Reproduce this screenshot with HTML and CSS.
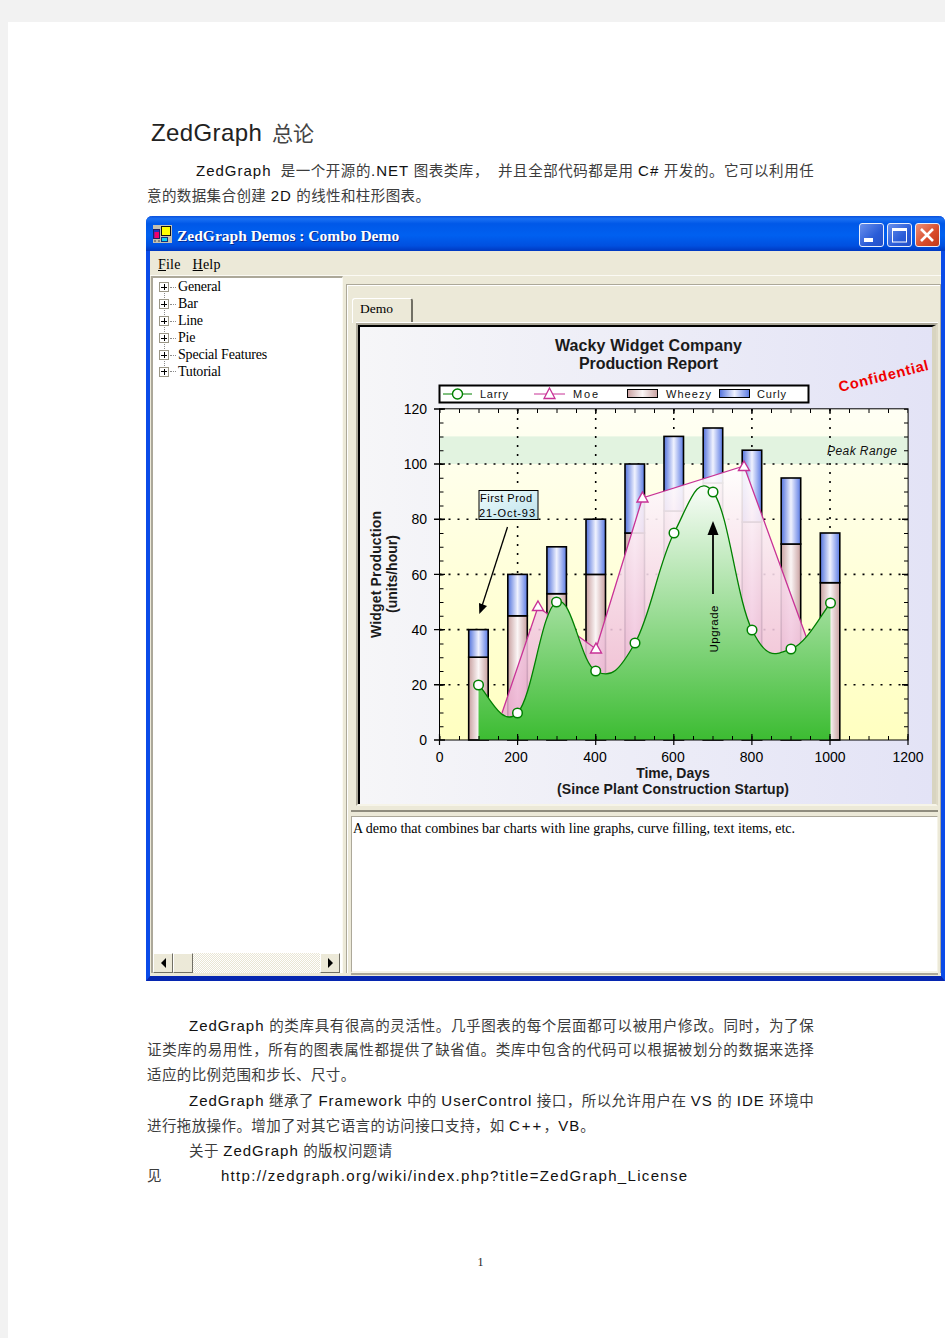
FILE: index.html
```html
<!DOCTYPE html>
<html lang="zh-CN">
<head>
  <meta charset="UTF-8" />
  <title>ZedGraph 总论</title>
  <link rel="stylesheet" href="styles.css">
</head>
<body>

<div class="hoja">
  <h1><span class="h-en">ZedGraph</span> 总论</h1>
  <p class="linea just sangria-a"><span class="en">ZedGraph</span>&nbsp; 是一个开源的<span class="en">.NET</span> 图表类库，&nbsp; 并且全部代码都是用 <span class="en">C#</span> 开发的。它可以利用任</p>
  <p class="linea">意的数据集合创建 <span class="en">2D</span> 的线性和柱形图表。</p>

  <div class="ventana">
    <div class="titulo">
      <svg class="icono" viewBox="0 0 19 18" width="19" height="18">
        <rect x="0" y="0" width="19" height="18" fill="#c4c0b0"/>
        <rect x="0.5" y="4.5" width="6" height="9" fill="#2030c0" stroke="#202060"/>
        <rect x="1.5" y="7" width="4.5" height="6" fill="#f0006a"/>
        <rect x="8.5" y="1.5" width="9" height="9" fill="#ffff00" stroke="#101010"/>
        <rect x="8.5" y="12.5" width="6" height="4" fill="#10d0f0" stroke="#103080"/>
        <rect x="1" y="15" width="2" height="2" fill="#808080"/>
        <rect x="5" y="15" width="2" height="2" fill="#808080"/>
      </svg>
      <span class="titulo-texto">ZedGraph Demos : Combo Demo</span>
      <div class="botones">
        <div class="btn-ven">
          <svg viewBox="0 0 25 24" width="25" height="24"><rect x="5" y="15" width="9" height="4" fill="#fff"/></svg>
        </div>
        <div class="btn-ven">
          <svg viewBox="0 0 25 24" width="25" height="24"><rect x="5.5" y="6" width="14" height="13" fill="none" stroke="#fff"/><rect x="5" y="5" width="15" height="3" fill="#fff"/></svg>
        </div>
        <div class="btn-ven cerrar">
          <svg viewBox="0 0 25 24" width="25" height="24"><path d="M6 6 L18 18 M18 6 L6 18" stroke="#fff" stroke-width="2.6"/></svg>
        </div>
      </div>
    </div>
    <div class="menu"><span><u>F</u>ile</span><span><u>H</u>elp</span></div>
    <div class="paneles">
      <div class="arbol">
        <ul class="nodos">
          <li><i class="caja"></i><i class="puntos"></i>General</li>
          <li><i class="caja"></i><i class="puntos"></i>Bar</li>
          <li><i class="caja"></i><i class="puntos"></i>Line</li>
          <li><i class="caja"></i><i class="puntos"></i>Pie</li>
          <li><i class="caja"></i><i class="puntos"></i>Special Features</li>
          <li><i class="caja"></i><i class="puntos"></i>Tutorial</li>
        </ul>
        <div class="scroll">
          <div class="scroll-btn"><i class="flecha izq"></i></div>
          <div class="scroll-thumb"></div>
          <div class="scroll-pista"></div>
          <div class="scroll-btn"><i class="flecha der"></i></div>
        </div>
      </div>
      <div class="derecha">
        <div class="pestana">Demo</div>
        <div class="marco-grafica">
          <svg class="grafica" viewBox="360 327 572 477" width="572" height="477">
            <defs>
              <linearGradient id="fondo"><stop offset="0" stop-color="#f6f6f8"/><stop offset="1" stop-color="#e3e3f6"/></linearGradient>
              <linearGradient id="plano" x1="0" y1="0" x2="0" y2="1"><stop offset="0" stop-color="#fffff4"/><stop offset="1" stop-color="#ffffc0"/></linearGradient>
              <linearGradient id="curly"><stop offset="0" stop-color="#5272dc"/><stop offset="0.5" stop-color="#f0f2fe"/><stop offset="1" stop-color="#5a7ae4"/></linearGradient>
              <linearGradient id="wheezy"><stop offset="0" stop-color="#c8a0a0"/><stop offset="0.5" stop-color="#fbf6f6"/><stop offset="1" stop-color="#c8a0a0"/></linearGradient>
              <linearGradient id="moe" gradientUnits="userSpaceOnUse" x1="0" y1="465" x2="0" y2="740"><stop offset="0" stop-color="#fff" stop-opacity="0.92"/><stop offset="1" stop-color="#eaa6cc" stop-opacity="0.85"/></linearGradient>
              <linearGradient id="larry" gradientUnits="userSpaceOnUse" x1="0" y1="478" x2="0" y2="740"><stop offset="0" stop-color="#fff"/><stop offset="1" stop-color="#3cbc32"/></linearGradient>
              <linearGradient id="nota" x1="0" y1="0" x2="1" y2="1"><stop offset="0" stop-color="#f0fbfb"/><stop offset="1" stop-color="#bce2ec"/></linearGradient>
            </defs>

            <rect x="360" y="327" width="572" height="477" fill="url(#fondo)"/>

            <text class="t-titulo" x="648.5" y="351" text-anchor="middle" textLength="187">Wacky Widget Company</text>
            <text class="t-titulo" x="648.5" y="369" text-anchor="middle" textLength="139">Production Report</text>
            <text class="t-conf" transform="translate(840 392) rotate(-14)" textLength="92">Confidential</text>

            <!-- legend -->
            <rect x="439.5" y="385.5" width="369" height="17" fill="#fff" stroke="#000" stroke-width="2"/>
            <path d="M443 394 H472" stroke="#008000"/>
            <circle cx="457.5" cy="394" r="5" fill="#fff" stroke="#008000" stroke-width="1.4"/>
            <text class="t-ley" x="480" y="398" textLength="28">Larry</text>
            <path d="M534 394 H565" stroke="#c83296"/>
            <path d="M549.5 388 L555 398.5 H544 Z" fill="#fff" stroke="#c83296" stroke-width="1.3"/>
            <text class="t-ley" x="573" y="398" textLength="25">Moe</text>
            <rect x="627.5" y="389.5" width="30" height="8" fill="url(#wheezy)" stroke="#000"/>
            <text class="t-ley" x="666" y="398" textLength="45">Wheezy</text>
            <rect x="719.5" y="389.5" width="30" height="8" fill="url(#curly)" stroke="#000"/>
            <text class="t-ley" x="757" y="398" textLength="29">Curly</text>

            <!-- plot area -->
            <rect x="439.5" y="408.8" width="468.6" height="331.2" fill="url(#plano)"/>
            <rect x="439.5" y="436.4" width="468.6" height="27.6" fill="#e2f3e0"/>

            <g class="rejilla">
              <path d="M439.5 464 H908 M439.5 519.2 H908 M439.5 574.4 H908 M439.5 629.6 H908 M439.5 684.8 H908"/>
              <path d="M517.6 409 V740 M595.7 409 V740 M673.8 409 V740 M751.9 409 V740 M830 409 V740"/>
            </g>

            <!-- bars -->
            <g class="barras">
              <rect x="468.7" y="657.2" width="19.5" height="82.8" fill="url(#wheezy)"/><rect x="468.7" y="629.6" width="19.5" height="27.6" fill="url(#curly)"/>
              <rect x="507.8" y="615.8" width="19.5" height="124.2" fill="url(#wheezy)"/><rect x="507.8" y="574.4" width="19.5" height="41.4" fill="url(#curly)"/>
              <rect x="546.9" y="593.7" width="19.5" height="146.3" fill="url(#wheezy)"/><rect x="546.9" y="546.8" width="19.5" height="46.9" fill="url(#curly)"/>
              <rect x="586" y="574.4" width="19.5" height="165.6" fill="url(#wheezy)"/><rect x="586" y="519.2" width="19.5" height="55.2" fill="url(#curly)"/>
              <rect x="625" y="533" width="19.5" height="207" fill="url(#wheezy)"/><rect x="625" y="464" width="19.5" height="69" fill="url(#curly)"/>
              <rect x="664" y="511" width="19.5" height="229" fill="url(#wheezy)"/><rect x="664" y="436.4" width="19.5" height="74.6" fill="url(#curly)"/>
              <rect x="703.2" y="483" width="19.5" height="257" fill="url(#wheezy)"/><rect x="703.2" y="428" width="19.5" height="55" fill="url(#curly)"/>
              <rect x="742.2" y="522" width="19.5" height="218" fill="url(#wheezy)"/><rect x="742.2" y="450.2" width="19.5" height="71.8" fill="url(#curly)"/>
              <rect x="781.2" y="544" width="19.5" height="196" fill="url(#wheezy)"/><rect x="781.2" y="478" width="19.5" height="66" fill="url(#curly)"/>
              <rect x="820.3" y="582.7" width="19.5" height="157.3" fill="url(#wheezy)"/><rect x="820.3" y="533" width="19.5" height="49.7" fill="url(#curly)"/>
            </g>

            <!-- Moe -->
            <path d="M502 713 L538 607 L596 649 L642.5 498 L744 466 L811 650 V740 H502 Z" fill="url(#moe)"/>
            <path d="M502 713 L538 607 L596 649 L642.5 498 L744 466 L811 650" fill="none" stroke="#c83296" stroke-width="1.3"/>

            <!-- Larry -->
            <path d="M478.5 685 C486.3 690.6 501.9 729.6 517.5 713 C533.1 696.4 540.9 610.4 556.5 602 C572.1 593.6 580 662.8 595.7 671 C611.4 679.2 619.3 670.6 635 643 C650.7 615.4 658.4 563.2 674 533 C689.6 502.8 697.4 472.6 713 492 C728.6 511.4 736.4 598.6 752 630 C767.6 661.4 775.3 654.4 791 649 C806.7 643.6 822.6 612.2 830.5 603 V740 H478.5 Z" fill="url(#larry)"/>
            <path d="M478.5 685 C486.3 690.6 501.9 729.6 517.5 713 C533.1 696.4 540.9 610.4 556.5 602 C572.1 593.6 580 662.8 595.7 671 C611.4 679.2 619.3 670.6 635 643 C650.7 615.4 658.4 563.2 674 533 C689.6 502.8 697.4 472.6 713 492 C728.6 511.4 736.4 598.6 752 630 C767.6 661.4 775.3 654.4 791 649 C806.7 643.6 822.6 612.2 830.5 603" fill="none" stroke="#008000" stroke-width="1.3"/>

            <g class="marca-moe">
              <path d="M538 601 L543.5 610.5 H532.5 Z"/>
              <path d="M596 643 L601.5 653 H590.5 Z"/>
              <path d="M642.5 492 L648 502 H637 Z"/>
              <path d="M744 461 L749.5 470.5 H738.5 Z"/>
            </g>
            <g class="marca-larry">
              <circle cx="478.5" cy="685" r="4.8"/><circle cx="517.5" cy="713" r="4.8"/><circle cx="556.5" cy="602" r="4.8"/>
              <circle cx="595.7" cy="671" r="4.8"/><circle cx="635" cy="643" r="4.8"/><circle cx="674" cy="533" r="4.8"/>
              <circle cx="713" cy="492" r="4.8"/><circle cx="752" cy="630" r="4.8"/><circle cx="791" cy="649" r="4.8"/>
              <circle cx="830.5" cy="603" r="4.8"/>
            </g>

            <!-- axes and ticks -->
            <rect x="439.5" y="408.8" width="468.6" height="331.2" fill="none" stroke="#000"/>
            <g class="menores">
              <line x1="441.5" y1="408.8" x2="441.5" y2="740"/>
              <line x1="906" y1="408.8" x2="906" y2="740"/>
              <line class="horiz" x1="439.5" y1="738" x2="908" y2="738"/>
              <line class="horiz" x1="439.5" y1="411" x2="908" y2="411"/>
            </g>
            <path d="M434 409 H445 M434 464 H445 M434 519.2 H445 M434 574.4 H445 M434 629.6 H445 M434 684.8 H445 M434 740 H445 M902 464 H908 M902 519.2 H908 M902 574.4 H908 M902 629.6 H908 M902 684.8 H908" stroke="#000" stroke-width="1.4"/>
            <path d="M439.5 734 V745 M517.6 734 V745 M595.7 734 V745 M673.8 734 V745 M751.9 734 V745 M830 734 V745 M908 734 V745 M517.6 409 V414 M595.7 409 V414 M673.8 409 V414 M751.9 409 V414 M830 409 V414" stroke="#000" stroke-width="1.2"/>

            <g class="t-eje" text-anchor="end">
              <text x="427" y="414">120</text><text x="427" y="469">100</text><text x="427" y="524">80</text>
              <text x="427" y="579.5">60</text><text x="427" y="634.5">40</text><text x="427" y="690">20</text><text x="427" y="745">0</text>
            </g>
            <g class="t-eje" text-anchor="middle">
              <text x="439.7" y="762">0</text><text x="516" y="762">200</text><text x="595" y="762">400</text><text x="673" y="762">600</text>
              <text x="751.5" y="762">800</text><text x="830" y="762">1000</text><text x="908" y="762">1200</text>
            </g>

            <text class="t-nombre" x="673" y="778" text-anchor="middle">Time, Days</text>
            <text class="t-nombre" x="673" y="794" text-anchor="middle" textLength="232">(Since Plant Construction Startup)</text>
            <text class="t-nombre" transform="translate(381 574.5) rotate(-90)" text-anchor="middle" textLength="127">Widget Production</text>
            <text class="t-nombre" transform="translate(397 574) rotate(-90)" text-anchor="middle" textLength="78">(units/hour)</text>

            <text class="t-peak" x="827" y="455" textLength="70">Peak Range</text>

            <!-- text item -->
            <rect x="479" y="490.5" width="59" height="29" fill="url(#nota)" stroke="#000"/>
            <text class="t-nota" x="480" y="502" textLength="52">First Prod</text>
            <text class="t-nota" x="479" y="516.5" textLength="56">21-Oct-93</text>
            <path d="M507.5 527 L482 606" stroke="#000" stroke-width="1.3"/>
            <path d="M479.3 614 L479 603 L487 606 Z" fill="#000"/>

            <path d="M713 594 V530" stroke="#000" stroke-width="1.8"/>
            <path d="M713 521 L718.5 535 H707.5 Z" fill="#000"/>
            <text class="t-up" transform="translate(717.5 652.5) rotate(-90)" textLength="47">Upgrade</text>
          </svg>
        </div>
        <div class="descripcion">A demo that combines bar charts with line graphs, curve filling, text items, etc.</div>
      </div>
    </div>
  </div>

  <p class="linea just sangria-b bajo-ventana"><span class="en">ZedGraph</span> 的类库具有很高的灵活性。几乎图表的每个层面都可以被用户修改。同时，为了保</p>
  <p class="linea just">证类库的易用性，所有的图表属性都提供了缺省值。类库中包含的代码可以根据被划分的数据来选择</p>
  <p class="linea">适应的比例范围和步长、尺寸。</p>
  <p class="linea just sangria-b"><span class="en">ZedGraph</span> 继承了 <span class="en">Framework</span> 中的 <span class="en">UserControl</span> 接口，所以允许用户在 <span class="en">VS</span> 的 <span class="en">IDE</span> 环境中</p>
  <p class="linea">进行拖放操作。增加了对其它语言的访问接口支持，如 <span class="en cpp">C++</span>，<span class="en">VB</span>。</p>
  <p class="linea sangria-b">关于 <span class="en">ZedGraph</span> 的版权问题请</p>
  <p class="linea enlace">见<span class="en url">http://zedgraph.org/wiki/index.php?title=ZedGraph_License</span></p>

  <div class="pagina">1</div>
</div>

</body>
</html>
```

FILE: styles.css
```css
html, body {
  margin: 0;
  background: #f2f2f2;
}

.hoja {
  margin: 22px 0 0 8px;
  height: 1316px;
  padding: 91px 131px 0 139px;
  box-sizing: border-box;
  background: #fff;
  font-family: "Liberation Sans", "Noto Sans CJK SC", sans-serif;
  color: #3c3c3c;
  overflow: hidden;
}

h1 {
  margin: 0 0 5px 4px;
  height: 40px;
  line-height: 40px;
  font-size: 21px;
  font-weight: normal;
  color: #444;
}

.h-en {
  font-size: 24px;
  letter-spacing: 0.4px;
  color: #222;
  margin-right: 4px;
}

.linea {
  margin: 0;
  height: 25px;
  line-height: 25px;
  font-size: 14.5px;
  letter-spacing: 0.4px;
  white-space: nowrap;
}

.just {
  letter-spacing: 0.3px;
  white-space: normal;
  text-align: justify;
  text-align-last: justify;
  text-justify: inter-character;
  overflow: hidden;
}

.en {
  font-size: 15px;
  letter-spacing: 1px;
  color: #111;
}

.cpp {
  letter-spacing: 2px;
}

.sangria-a { padding-left: 49px; }
.sangria-b { padding-left: 42px; }
.bajo-ventana { margin-top: 31.5px; }

.url {
  margin-left: 59px;
  letter-spacing: 1.32px;
}

.pagina {
  margin-top: 67px;
  text-align: center;
  font: 12px "Liberation Serif", serif;
  color: #222;
}

/* ventana XP */
.ventana {
  display: flex;
  flex-direction: column;
  box-sizing: border-box;
  height: 765px;
  width: 799px;
  margin: 8px 0 0 -1px;
  border: 4px solid #0a4be8;
  border-top: 0;
  border-bottom: 5px solid #0626b0;
  border-radius: 6px 6px 0 0;
  background: #ece9d8;
  font-family: "Liberation Serif", serif;
  color: #000;
}

.titulo {
  display: flex;
  align-items: center;
  height: 35px;
  margin: 0 -4px;
  padding: 0 5px 0 7px;
  border-radius: 6px 6px 0 0;
  background: linear-gradient(#0a50dc, #1a70f2 8%, #0058e8 22%, #0060f0 55%, #0050e0 85%, #0038c0);
}

.icono {
  flex: none;
  margin-right: 5px;
}

.titulo-texto {
  margin-top: 5px;
  font-weight: bold;
  font-size: 15.5px;
  color: #fff;
  text-shadow: 1px 1px 0 #0a2a90;
}

.botones {
  display: flex;
  gap: 3px;
  margin: 3px 0 0 auto;
}

.btn-ven {
  width: 25px;
  height: 24px;
  box-sizing: border-box;
  border: 1px solid #e8eefc;
  border-radius: 3px;
  background: linear-gradient(135deg, #6a90ec, #2a5cd8 60%, #2450c8);
  overflow: hidden;
}

.btn-ven svg {
  display: block;
  margin: -1px;
}

.cerrar {
  background: linear-gradient(135deg, #ec9078, #d84a28 60%, #c03a1a);
}

.menu {
  display: flex;
  gap: 12px;
  height: 25px;
  align-items: center;
  padding: 3px 0 0 8px;
  border-bottom: 1px solid #fbfaf4;
  box-sizing: border-box;
  font-size: 14px;
  letter-spacing: 0.2px;
}

.paneles {
  flex: 1;
  display: flex;
  gap: 3px;
  min-height: 0;
  padding: 0 0 3px 1px;
}

.arbol {
  width: 192px;
  display: flex;
  flex-direction: column;
  box-sizing: border-box;
  border-top: 2px solid #aca899;
  border-left: 2px solid #aca899;
  border-right: 1px solid #fbfaf4;
  background: #fff;
}

.nodos {
  flex: 1;
  margin: 0;
  padding: 1px 0 0 6px;
  list-style: none;
  font-size: 14px;
  letter-spacing: -0.2px;
}

.nodos li {
  display: flex;
  align-items: center;
  height: 16.9px;
  position: relative;
  white-space: nowrap;
}

.caja {
  flex: none;
  width: 10px;
  height: 10px;
  box-sizing: border-box;
  border: 1px solid #9a9686;
  background:
    linear-gradient(#000, #000) center / 6px 1px no-repeat,
    linear-gradient(#000, #000) center / 1px 6px no-repeat,
    #fff;
}

.puntos {
  flex: none;
  width: 6px;
  margin: 0 2px 0 1px;
  border-top: 1px dotted #8a8a8a;
}

.nodos li:not(:last-child)::before {
  content: "";
  position: absolute;
  left: 5px;
  top: 14px;
  height: 7px;
  border-left: 1px dotted #8a8a8a;
}

.scroll {
  display: flex;
  height: 20px;
  flex: none;
  margin-right: 2px;
}

.scroll-btn, .scroll-thumb {
  flex: none;
  box-sizing: border-box;
  width: 20px;
  border: 1px solid;
  border-color: #fff #716f64 #716f64 #fff;
  background: #ece9d8;
  display: flex;
  align-items: center;
  justify-content: center;
}

.scroll-pista {
  flex: 1;
  background: repeating-conic-gradient(#e9e6d4 0 25%, #fff 0 50%) 0 0 / 2px 2px;
}

.flecha {
  width: 0;
  height: 0;
  border-top: 5px solid transparent;
  border-bottom: 5px solid transparent;
}

.izq { border-right: 5px solid #000; }
.der { border-left: 5px solid #000; }

.derecha {
  flex: 1;
  display: flex;
  flex-direction: column;
  box-sizing: border-box;
  margin-top: 8px;
  padding: 13px 2px 0 4px;
  border: 1px solid #aca899;
  border-bottom: 0;
  box-shadow: inset 1px 1px 0 #fff;
}

.pestana {
  flex: none;
  width: 61px;
  height: 25px;
  margin-left: 1px;
  box-sizing: border-box;
  padding: 0 0 0 7px;
  border-top: 1px solid #fff;
  border-left: 1px solid #fff;
  border-right: 2px solid #716f64;
  border-radius: 3px 3px 0 0;
  font-size: 13.5px;
  line-height: 20px;
}

.marco-grafica {
  flex: none;
  margin-left: 5px;
  border: 2px solid #aca899;
  border-right-color: #ded9c6;
  border-bottom-color: #f6f4e8;
  width: 582px;
  box-sizing: border-box;
  box-shadow: 0 -1px 0 #fff;
}

.grafica {
  display: block;
  border-top: 2px solid #000;
  border-left: 2px solid #000;
  border-right: 4px solid #d8d4c0;
  font-family: "Liberation Sans", sans-serif;
}

.rejilla path {
  fill: none;
  stroke: #000;
  stroke-width: 1.6;
  stroke-dasharray: 2 7;
}

.barras rect {
  stroke: #000;
  stroke-width: 1.6;
}

.marca-moe path {
  fill: #fff;
  stroke: #c83296;
  stroke-width: 1.4;
}

.marca-larry circle {
  fill: #fff;
  stroke: #008000;
  stroke-width: 1.5;
}

.menores line {
  stroke: #000;
  stroke-width: 4;
  stroke-dasharray: 1 12.8;
}

.menores .horiz {
  stroke-dasharray: 1 18.5;
}

.t-titulo {
  font-size: 16px;
  font-weight: bold;
  fill: #1a1a1a;
}

.t-conf {
  font-size: 14.5px;
  font-weight: bold;
  fill: #f00000;
}

.t-ley {
  font-size: 11px;
  fill: #111;
}

.t-eje text {
  font-size: 14px;
  fill: #000;
}

.t-nombre {
  font-size: 14px;
  font-weight: bold;
  fill: #1a1a1a;
}

.t-peak {
  font-size: 12px;
  font-style: italic;
  fill: #111;
}

.t-nota {
  font-size: 11px;
  fill: #000;
}

.t-up {
  font-size: 11.5px;
  fill: #000;
}

.descripcion {
  flex: 1;
  margin-top: 10px;
  padding: 4px 1px 0 1px;
  border: 1px solid #aca899;
  border-right-color: #f6f4e8;
  border-bottom: 2px solid #f6f4e8;
  box-shadow: 0 -4px 0 #ece9d8, 0 -6px 0 #8f8c7e, 0 2px 0 #aca899;
  background: #fff;
  font-size: 14px;
  white-space: nowrap;
}
```
